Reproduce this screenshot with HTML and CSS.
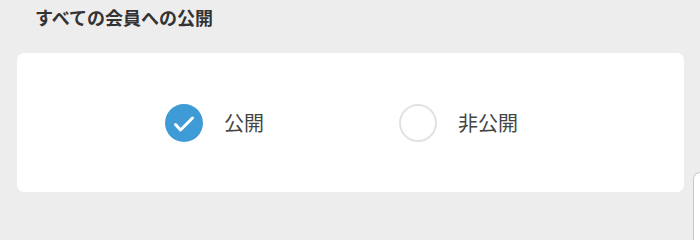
FILE: index.html
```html
<!DOCTYPE html>
<html lang="ja">
<head>
<meta charset="utf-8">
<link rel="stylesheet" href="styles.css">
</head>
<body>
<h2 class="title">すべての会員への公開</h2>
<div class="card">
  <div class="options">
    <label class="option">
      <span class="radio radio-checked">
        <svg viewBox="0 0 38 38" width="38" height="38"><circle cx="19" cy="19" r="19" fill="#3e9bd5"/><path d="M10.5 20.5 L15.5 26 L27.5 14" fill="none" stroke="#fff" stroke-width="3" stroke-linecap="round" stroke-linejoin="round"/></svg>
      </span>
      <span class="label">公開</span>
    </label>
    <label class="option">
      <span class="radio radio-empty"></span>
      <span class="label">非公開</span>
    </label>
  </div>
</div>
<div class="floating"></div>
</body>
</html>
```
FILE: styles.css
```css
html, body {
  margin: 0;
  padding: 0;
  background: #ededed;
  font-family: "Noto Sans CJK JP", "Noto Sans", sans-serif;
  overflow: hidden;
}
body {
  position: relative;
  min-height: 240px;
}
.title {
  margin: 8px 0 0 35px;
  font-size: 18px;
  line-height: 18px;
  font-weight: 700;
  color: #333;
}
.card {
  margin: 27px 0 0 17px;
  width: 667px;
  height: 139px;
  background: #fff;
  border-radius: 7px;
  display: flex;
  align-items: center;
}
.options {
  display: grid;
  grid-template-columns: 233px auto;
  padding-left: 148px;
  padding-top: 1px;
}
.option {
  display: flex;
  align-items: center;
  gap: 21px;
}
.radio {
  width: 38px;
  height: 38px;
  display: block;
  box-sizing: border-box;
}
.radio svg {
  display: block;
}
.radio-empty {
  border: 2px solid #e2e2e2;
  border-radius: 50%;
  margin-left: 1px;
}
.label {
  font-size: 20px;
  color: #444;
  line-height: 24px;
}
.floating {
  position: absolute;
  left: 693px;
  top: 172px;
  width: 7px;
  height: 68px;
  box-sizing: border-box;
  background: #fff;
  border-left: 1px solid #c8c8c8;
  border-top: 1px solid #c8c8c8;
  border-top-left-radius: 8px;
}
```
